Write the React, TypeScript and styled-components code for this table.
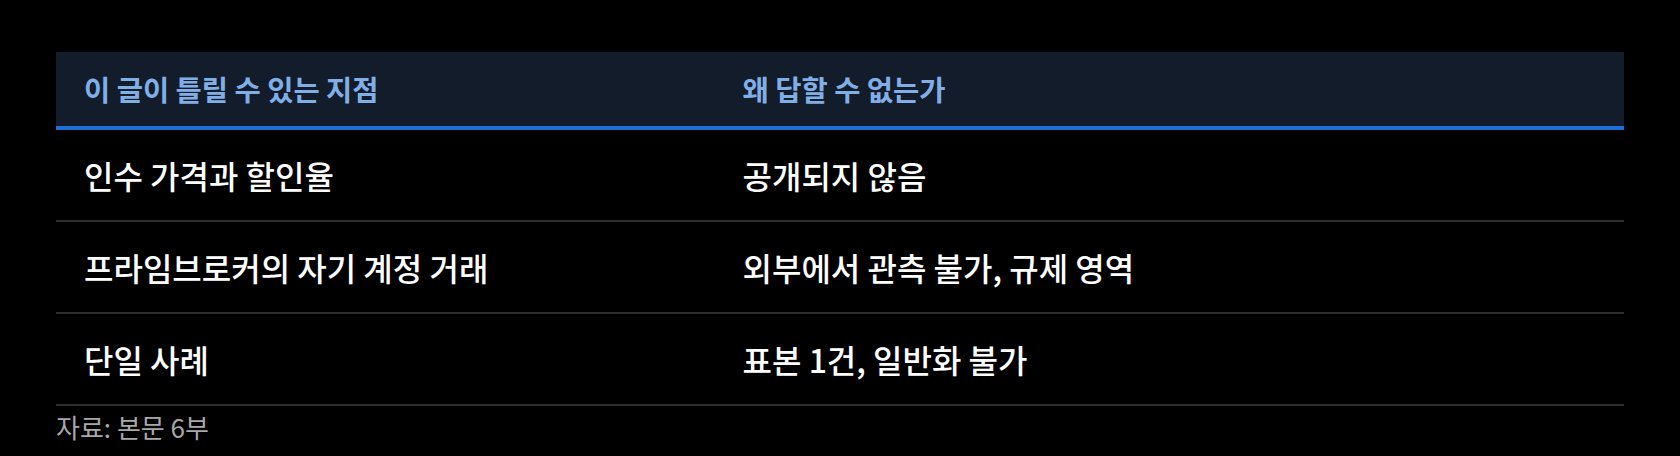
import styled, { createGlobalStyle } from 'styled-components'

const GlobalStyle = createGlobalStyle`
  html, body {
    margin: 0;
    padding: 0;
    background: #000;
  }
  body {
    font-family: "Noto Sans CJK KR", "Noto Sans", sans-serif;
    color: #fff;
  }
`

const rows = [
  { point: '인수 가격과 할인율', reason: '공개되지 않음' },
  { point: '프라임브로커의 자기 계정 거래', reason: '외부에서 관측 불가, 규제 영역' },
  { point: '단일 사례', reason: '표본 1건, 일반화 불가' },
]

const App = () => {
  return (
    <>
      <GlobalStyle />
      <Page>
        <Table>
          <HeadRow>
            <HeadCell>이 글이 틀릴 수 있는 지점</HeadCell>
            <HeadCell>왜 답할 수 없는가</HeadCell>
          </HeadRow>
          {rows.map((row, i) => (
            <BodyRow key={`row-${i}`}>
              <Cell>{row.point}</Cell>
              <Cell>{row.reason}</Cell>
            </BodyRow>
          ))}
        </Table>
        <Caption>자료: 본문 6부</Caption>
      </Page>
    </>
  )
}

export default App

const Page = styled.div`
  padding: 52px 56px 0;
`

const Table = styled.div`
  display: flex;
  flex-direction: column;
`

const HeadRow = styled.div`
  display: grid;
  grid-template-columns: 42% 1fr;
  height: 74px;
  align-items: center;
  background-color: #121c2b;
  border-bottom: 4px solid #1f6fd6;
`

const HeadCell = styled.div`
  padding: 0 28px;
  font-size: 28.5px;
  line-height: 36px;
  font-weight: 700;
  color: #82aee6;
`

const BodyRow = styled.div`
  display: grid;
  grid-template-columns: 42% 1fr;
  align-items: center;
  height: 90px;
  border-bottom: 2px solid #2e2e2e;
`

const Cell = styled.div`
  padding: 0 28px;
  font-size: 32px;
  line-height: 40px;
  font-weight: 500;
  color: #fff;
`

const Caption = styled.div`
  padding-top: 5px;
  font-size: 26px;
  line-height: 32px;
  color: #a8a8a8;
`
